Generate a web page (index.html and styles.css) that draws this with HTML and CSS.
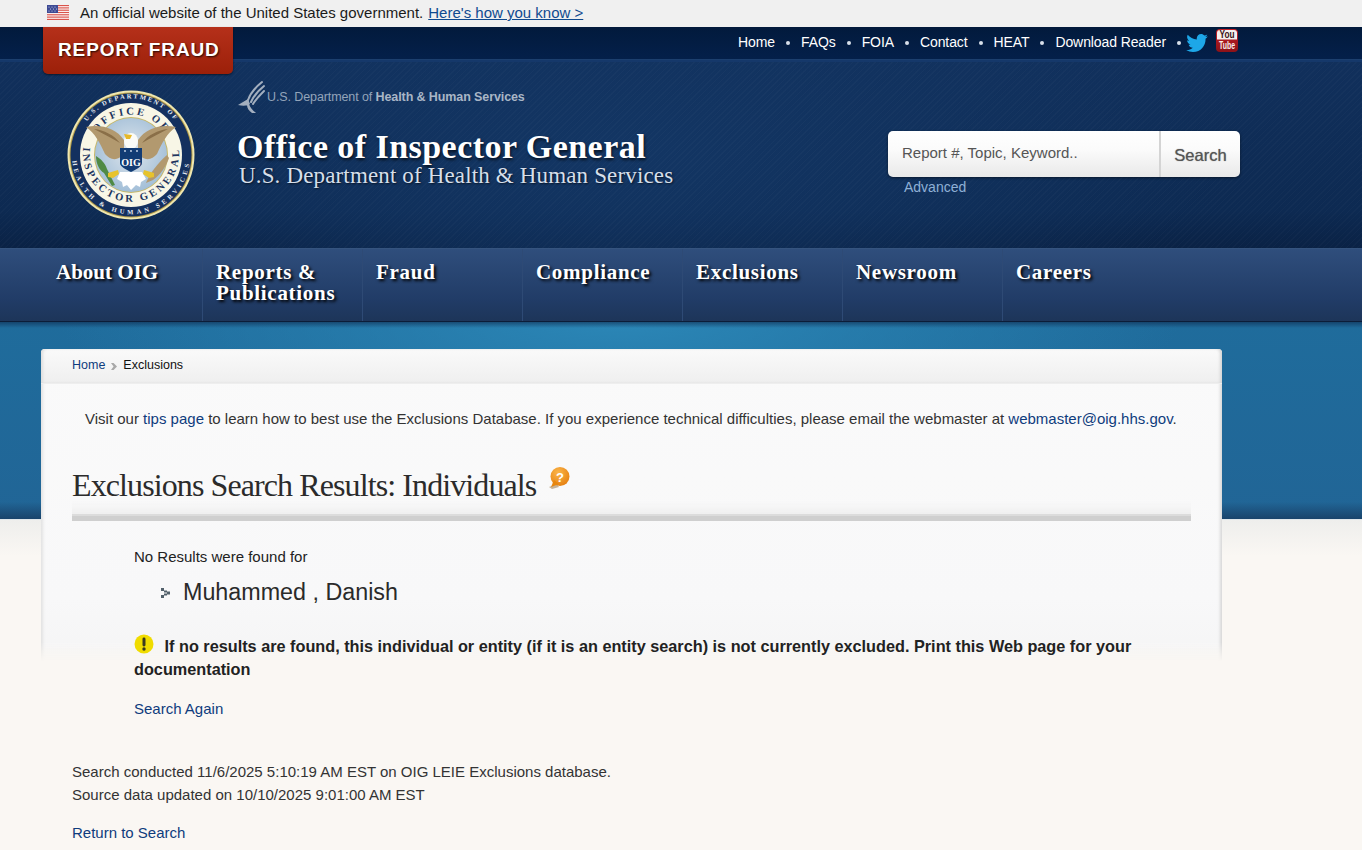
FILE: index.html
```html
<!DOCTYPE html>
<html lang="en">
<head>
<meta charset="utf-8">
<title>Exclusions Search Results: Individuals</title>
<link rel="stylesheet" href="styles.css">
</head>
<body>
<div class="gov-banner">
  <svg class="flag" width="22" height="15" viewBox="0 0 22 15">
    <rect width="22" height="15" fill="#fff"/>
    <g fill="#d9534a"><rect width="22" height="1.2"/><rect y="2.3" width="22" height="1.2"/><rect y="4.6" width="22" height="1.2"/><rect y="6.9" width="22" height="1.2"/><rect y="9.2" width="22" height="1.2"/><rect y="11.5" width="22" height="1.2"/><rect y="13.8" width="22" height="1.2"/></g>
    <rect width="11" height="8" fill="#3d4a94"/>
    <g fill="#cfd4ee"><circle cx="2" cy="2" r=".6"/><circle cx="5" cy="2" r=".6"/><circle cx="8" cy="2" r=".6"/><circle cx="3.5" cy="4" r=".6"/><circle cx="6.5" cy="4" r=".6"/><circle cx="9.5" cy="4" r=".6"/><circle cx="2" cy="6" r=".6"/><circle cx="5" cy="6" r=".6"/><circle cx="8" cy="6" r=".6"/></g>
  </svg>
  <span>An official website of the United States government.</span>
  <a class="gov-link" href="#">Here's how you know &gt;</a>
</div>

<div class="top-bar">
  <a class="fraud" href="#">REPORT FRAUD</a>
  <ul class="top-links">
    <li><a href="#">Home</a></li>
    <li><a href="#">FAQs</a></li>
    <li><a href="#">FOIA</a></li>
    <li><a href="#">Contact</a></li>
    <li><a href="#">HEAT</a></li>
    <li><a href="#">Download Reader</a></li>
  </ul>
  <svg class="twitter" width="22" height="18" viewBox="0 0 24 20"><path fill="#1da7e8" d="M24 2.4c-.9.4-1.8.7-2.8.8 1-.6 1.8-1.6 2.2-2.7-1 .6-2 1-3.1 1.2C19.300.7 18 0 16.600 0c-2.700 0-4.900 2.200-4.900 4.900 0 .4 0 .8.100 1.100C7.700 5.800 4.100 3.900 1.700.9 1.300 1.600 1 2.500 1 3.400c0 1.700.9 3.200 2.200 4.100-.8 0-1.600-.2-2.200-.6v.1c0 2.400 1.700 4.400 3.900 4.800-.7.2-1.500.2-2.200.1.600 2 2.400 3.400 4.600 3.400C5.600 17 3 17.900.9 17.900c-.3 0-.6 0-.9 0 2.200 1.400 4.800 2.100 7.500 2.100 9.100 0 14-7.500 14-14v-.6c1-.7 1.800-1.600 2.500-3z"/></svg>
  <svg class="youtube" width="22" height="23" viewBox="0 0 22 23">
    <defs><linearGradient id="ytRed" x1="0" y1="0" x2="0" y2="1"><stop offset="0" stop-color="#c62026"/><stop offset="1" stop-color="#8c1218"/></linearGradient></defs>
    <rect width="22" height="23" rx="4" fill="url(#ytRed)"/>
    <path d="M4 1h14a3 3 0 0 1 3 3v6.500H1V4a3 3 0 0 1 3-3z" fill="#f4f0ee"/>
    <text x="3.500" y="9" class="yt-you" textLength="15" lengthAdjust="spacingAndGlyphs">You</text>
    <text x="3" y="20" class="yt-tube" textLength="16" lengthAdjust="spacingAndGlyphs">Tube</text>
  </svg>
</div>

<header class="masthead">
  <svg class="seal" width="160" height="160" viewBox="0 0 160 160">
    <defs>
      <path id="arcTopOuter" d="M31 60A54 54 0 0 1 131 60"/>
      <path id="arcBottomOuter" d="M24 68A59 59 0 1 0 138 68"/>
      <path id="arcTopInner" d="M43 70A40 40 0 0 1 119 70"/>
      <path id="arcBottomInner" d="M34 72A48 48 0 1 0 128 72"/>
      <radialGradient id="sky" cx=".5" cy=".45" r=".6"><stop offset="0" stop-color="#dfe6ec"/><stop offset="1" stop-color="#9dbbd6"/></radialGradient>
    </defs>
    <ellipse cx="81" cy="83" rx="63.500" ry="64.500" fill="#efe7b0"/>
    <ellipse cx="81" cy="83" rx="61.500" ry="62.500" fill="#b39c49"/>
    <ellipse cx="81" cy="83" rx="60.500" ry="61.500" fill="#14305f"/>
    <ellipse cx="81" cy="83" rx="51" ry="52" fill="#f8f6e6"/>
    <ellipse cx="81" cy="83" rx="37" ry="38" fill="#c5b768"/>
    <ellipse cx="81" cy="83" rx="36" ry="37" fill="url(#sky)"/>
    <text class="seal-outer seal-top"><textPath href="#arcTopOuter" startOffset="50%">U.S. DEPARTMENT OF</textPath></text>
    <text class="seal-outer"><textPath href="#arcBottomOuter" startOffset="50%">HEALTH &amp; HUMAN SERVICES</textPath></text>
    <text class="seal-inner"><textPath href="#arcTopInner" startOffset="50%">OFFICE OF</textPath></text>
    <text class="seal-inner seal-bottom"><textPath href="#arcBottomInner" startOffset="50%">INSPECTOR GENERAL</textPath></text>
    <path fill="#b2996f" d="M36 55c15-3 30 1 38 13v13c-6 9-14 7-19 1C50 71 45 61 36 55z"/>
    <path fill="#b2996f" d="M126 55c-15-3-30 1-38 13v13c6 9 14 7 19 1 5-11 10-21 19-27z"/>
    <path fill="#8a6f48" d="M44 57c10 1 20 6 26 14-8-5-17-9-26-14zM118 57c-10 1-20 6-26 14 8-5 17-9 26-14z"/>
    <path fill="#4f8a45" d="M46 84c5 3 9 7 11 13l8 16-3 1-8-13c-5-3-8-10-8-17z"/>
    <path fill="#b2996f" d="M117 83l2 3c-3 9-9 17-16 22l-7 3c4-10 12-20 21-28z"/>
    <path fill="#fff" d="M70 100h22l4 7-5 3-1 5-4-2-5 5-4-5-4 2-1-5-5-3z"/>
    <path fill="#e7c32c" d="M58 101l10-3 1 4-6 4-5-1zM104 101l-10-3-1 4 6 4 5-1z"/>
    <ellipse cx="81" cy="69" rx="7" ry="8" fill="#fbfbf7"/>
    <path fill="#e6b829" d="M74 62l8 1-2 4-4 0z"/>
    <path fill="#123c74" d="M70 76h22v15c0 4-7 7-11 9-4-2-11-5-11-9z"/>
    <text class="seal-oig" x="81" y="94">OIG</text>
    <g fill="#d4dff0"><circle cx="75" cy="79" r=".9"/><circle cx="81" cy="79" r=".9"/><circle cx="87" cy="79" r=".9"/></g>
  </svg>

  <div class="title-block">
    <div class="hhs-line">
      <svg class="hhs-logo" width="28" height="34" viewBox="0 0 28 34">
        <g fill="none" stroke="#a3afbf" stroke-width="2" stroke-linecap="round">
          <path d="M25 2C20 6 14 12 11 20"/>
          <path d="M27 6C22 10 17 15 14 22"/>
          <path d="M27 11C23 15 19 19 16 24"/>
        </g>
        <path fill="#a3afbf" d="M1 25l10-6 2 5c-3 2-7 2-12 1zM12 24c1 3 3 6 7 9h-4c-3-2-5-5-5-8z"/>
      </svg>
      <span>U.S. Department of <b>Health &amp; Human Services</b></span>
    </div>
    <div class="org-name">Office of Inspector General</div>
    <div class="org-sub">U.S. Department of Health &amp; Human Services</div>
  </div>

  <div class="search-block">
    <form class="search-box">
      <input class="search-input" type="text" placeholder="Report #, Topic, Keyword..">
      <button class="search-btn" type="button">Search</button>
    </form>
    <a class="advanced" href="#">Advanced</a>
  </div>
</header>

<nav class="main-nav">
  <a class="nav-about" href="#">About OIG</a>
  <a href="#">Reports &amp; Publications</a>
  <a href="#">Fraud</a>
  <a href="#">Compliance</a>
  <a href="#">Exclusions</a>
  <a href="#">Newsroom</a>
  <a href="#">Careers</a>
</nav>

<main class="stage">
  <div class="card">
    <div class="crumbs">
      <a href="#">Home</a>
      <svg class="crumb-sep" width="6" height="7" viewBox="0 0 7 8"><path fill="#a9a9a9" d="M0 0l3 0 4 4-4 4H0l3-4z"/></svg>
      <span>Exclusions</span>
    </div>

    <p class="notice">Visit our <a href="#">tips page</a> to learn how to best use the Exclusions Database. If you experience technical difficulties, please email the webmaster at <a href="#">webmaster@oig.hhs.gov</a>.</p>

    <div class="heading-row">
      <h1>Exclusions Search Results: Individuals</h1>
      <svg class="help" width="23" height="24" viewBox="0 0 23 24">
        <defs><radialGradient id="bubble" cx=".4" cy=".3" r=".8"><stop offset="0" stop-color="#fbb64a"/><stop offset="1" stop-color="#e47c0c"/></radialGradient></defs>
        <path fill="#8a5a20" opacity=".45" d="M1 21l8-3 2 3-7 2z"/>
        <circle cx="12" cy="10.500" r="9.500" fill="url(#bubble)"/>
        <path fill="#e8860f" d="M6 14l-3 7 8-3z"/>
        <text x="12" y="15.500" class="help-mark">?</text>
      </svg>
    </div>

    <div class="results">
      <p class="none-found">No Results were found for</p>
      <div class="name-row">
        <svg class="name-bullet" width="9" height="10" viewBox="0 0 9 10"><path fill="#52606b" d="M0 0h3v3H0zM3 2.500h3v2H3zM0 7h3v3H0zM3 5.500h3v2H3zM6 3.500h3v3H6z"/></svg>
        <span>Muhammed , Danish</span>
      </div>
      <p class="warning">
        <svg class="warn-icon" width="20" height="20" viewBox="0 0 20 20"><circle cx="10" cy="10" r="9.500" fill="#f0dc00"/><rect x="8.500" y="3.500" width="3" height="9" rx="1.400" fill="#3a3a20"/><circle cx="10" cy="15" r="1.700" fill="#3a3a20"/></svg>
        If no results are found, this individual or entity (if it is an entity search) is not currently excluded. Print this Web page for your documentation
      </p>
      <a class="again" href="#">Search Again</a>
    </div>

    <div class="meta">
      <p>Search conducted 11/6/2025 5:10:19 AM EST on OIG LEIE Exclusions database.</p>
      <p>Source data updated on 10/10/2025 9:01:00 AM EST</p>
    </div>
    <a class="return" href="#">Return to Search</a>
  </div>
</main>
</body>
</html>
```

FILE: styles.css
```css
* { box-sizing: border-box; }
html, body { margin: 0; padding: 0; }
body {
  background: #faf7f3;
  color: #222;
  font-family: "Liberation Sans", Arial, sans-serif;
  font-size: 14px;
  min-width: 1362px;
}
a { color: #0f3c7d; text-decoration: none; }
p { margin: 0; }

/* Government banner */
.gov-banner {
  height: 27px;
  background: #f0f0f0;
  display: flex;
  align-items: center;
  padding: 0 0 2px 47px;
  font-size: 15px;
  color: #1b1b1b;
}
.flag { margin-right: 11px; }
.gov-link { color: #0f4a8f; text-decoration: underline; margin-left: 5px; }

/* Top bar */
.top-bar {
  position: relative;
  height: 33px;
  background: linear-gradient(#021a3c, #04204a);
  border-bottom: 1px solid #1c3f6e;
  display: flex;
  align-items: center;
  justify-content: flex-end;
  padding: 0 124px 2px 0;
}
.fraud {
  position: absolute;
  left: 43px;
  top: 0;
  width: 190px;
  height: 47px;
  padding: 12px 0 0 15px;
  background: linear-gradient(#b5301a, #9c2009);
  border-radius: 0 0 5px 5px;
  box-shadow: 0 1px 2px rgba(0,0,0,.5);
  color: #fff;
  font-size: 19px;
  font-weight: bold;
  letter-spacing: .9px;
  text-shadow: 1px 1px 2px rgba(0,0,0,.8);
  z-index: 2;
}
.top-links {
  display: flex;
  list-style: none;
  margin: 0;
  padding: 0;
}
.top-links li {
  display: flex;
  align-items: center;
}
.top-links li::after {
  content: "";
  width: 4px;
  height: 4px;
  border-radius: 50%;
  background: #d8e0ea;
  margin: 2px 11px 0;
}
.top-links a { color: #fff; font-size: 14px; letter-spacing: -.1px; }
.twitter { margin: 2px 8px 0 -6px; }
.youtube { margin-top: -3px; }
.yt-you, .yt-tube {
  font-family: "Liberation Sans", Arial, sans-serif;
  font-weight: bold;
}
.yt-you { fill: #3a1216; font-size: 10px; }
.yt-tube { fill: #f8eeec; font-size: 11px; }

/* Masthead */
.masthead {
  height: 188px;
  display: flex;
  background:
    repeating-linear-gradient(135deg, rgba(255,255,255,.018) 0 1px, transparent 1px 4px),
    radial-gradient(ellipse 620px 220px at 620px 90px, #133664, rgba(19,54,100,0) 100%),
    linear-gradient(#11305c, #0d2a52 80%, #0a2245);
  box-shadow: inset 0 2px 0 #15386a;
  padding: 10px 122px 0 50px;
}
.seal { flex: none; margin: 2px 27px 0 0; }
.seal-outer {
  font-family: "Liberation Serif", serif;
  font-size: 6.500px;
  font-weight: bold;
  letter-spacing: 3.400px;
  text-anchor: middle;
  fill: #e8edf4;
}
.seal-top { letter-spacing: 1.900px; }
.seal-inner {
  font-family: "Liberation Serif", serif;
  font-size: 10.500px;
  font-weight: bold;
  letter-spacing: 2.600px;
  text-anchor: middle;
  fill: #20345e;
}
.seal-bottom { letter-spacing: 2.800px; }
.seal-oig {
  font-family: "Liberation Serif", serif;
  font-size: 10px;
  font-weight: bold;
  text-anchor: middle;
  fill: #fff;
}
.title-block { flex: 1; padding-top: 10px; }
.hhs-line {
  display: flex;
  align-items: center;
  height: 34px;
  color: #93a4ba;
  font-size: 12.500px;
  letter-spacing: -.1px;
}
.hhs-line b { color: #a9b6c6; }
.hhs-logo { margin-right: 2px; }
.org-name {
  margin-top: 15px;
  color: #fff;
  font-family: "Liberation Serif", serif;
  font-size: 34px;
  font-weight: bold;
  letter-spacing: .45px;
  line-height: 36px;
  text-shadow: 1px 2px 3px rgba(0,0,0,.7);
}
.org-sub {
  margin: -2px 0 0 2px;
  color: #d6dfea;
  font-family: "Liberation Serif", serif;
  font-size: 23px;
  letter-spacing: .15px;
  line-height: 26px;
  text-shadow: 1px 1px 2px rgba(0,0,0,.6);
}
.search-block { width: 352px; flex: none; padding-top: 61px; }
.search-box {
  display: flex;
  height: 46px;
  border-radius: 5px;
  overflow: hidden;
  background: linear-gradient(#fff, #fbfbfb 40%, #e9e9e9);
  box-shadow: 0 1px 3px rgba(0,0,0,.5);
  margin: 0;
}
.search-input {
  width: 273px;
  border: 0;
  background: transparent;
  padding: 0 0 3px 14px;
  font-family: "Liberation Sans", Arial, sans-serif;
  font-size: 15px;
  outline: none;
  border-right: 2px solid #d4d4d4;
}
.search-input::placeholder { color: #555; opacity: 1; }
.search-btn {
  flex: 1;
  border: 0;
  background: transparent;
  padding: 3px 0 0;
  color: #555;
  font-family: "Liberation Sans", Arial, sans-serif;
  font-size: 16.500px;
  text-shadow: 0 0 1px #777;
}
.advanced {
  display: block;
  margin: 2px 0 0 16px;
  color: #8fb0d6;
  font-size: 14px;
  line-height: 17px;
}

/* Main navigation */
.main-nav {
  height: 74px;
  display: flex;
  padding-left: 42px;
  background: linear-gradient(#2f4e7c, #213c67 70%, #1d3559);
  border-top: 1px solid #35547f;
  border-bottom: 1px solid #0c1d38;
}
.main-nav a {
  width: 160px;
  padding: 13px 8px 0 13px;
  border-left: 1px solid #2e4a75;
  color: #fff;
  font-family: "Liberation Serif", serif;
  font-size: 21px;
  font-weight: bold;
  letter-spacing: .7px;
  line-height: 21px;
  text-shadow: 2px 2px 3px #000;
}
.main-nav .nav-about { border-left: 0; padding-left: 14px; letter-spacing: 0; }

/* Page stage */
.stage {
  padding-top: 27px;
  background:
    linear-gradient(rgba(24,62,100,0) 180px, rgba(24,62,100,.85) 197px, #dfe6ea 197px, #dfe6ea 198px) 0 0 / 100% 198px no-repeat,
    linear-gradient(rgba(12,35,70,.55), rgba(12,35,70,0) 6px) 0 0 / 100% 6px no-repeat,
    radial-gradient(ellipse 560px 130px at 620px 0, #2b86b6, rgba(43,134,182,0) 100%) 0 0 / 100% 197px no-repeat,
    linear-gradient(#1f6c9c, #216596) 0 0 / 100% 197px no-repeat,
    linear-gradient(#eeeeec, #faf7f3) 0 198px / 100% 36px no-repeat;
}
.card {
  position: relative;
  isolation: isolate;
  width: 1181px;
  margin-left: 41px;
  padding: 0 31px 12px;
}
.card::before {
  content: "";
  position: absolute;
  z-index: -1;
  left: 0;
  top: 0;
  width: 100%;
  height: 312px;
  border-radius: 4px 4px 0 0;
  background: linear-gradient(#fafafa, #f8f8f9 80%, #f5f5f5);
  box-shadow: inset -3px 0 3px -1px #d8d8d8, inset 3px 0 3px -1px #e2e2e2;
  -webkit-mask-image: linear-gradient(#000 94%, transparent);
  mask-image: linear-gradient(#000 94%, transparent);
}
.crumbs {
  display: flex;
  align-items: center;
  height: 35px;
  margin: 0 -31px;
  padding: 0 0 2px 31px;
  font-size: 12.500px;
  color: #111;
  border-radius: 4px 4px 0 0;
  background: linear-gradient(#fafafa, #efefef);
  border-bottom: 1px solid #eee;
  box-shadow: inset -3px 0 3px -1px #d4d4d4, inset 3px 0 3px -1px #dedede;
}
.crumb-sep { margin: 3px 6px 0 6px; }
.notice {
  margin: 25px 0 0 13px;
  font-size: 15px;
  line-height: 20px;
  color: #333;
}
.heading-row {
  display: flex;
  align-items: flex-start;
  margin-top: 28px;
  height: 64px;
  border-bottom: 5px solid #cfcfcf;
  box-shadow: inset 0 -2px 0 #dcdcdc, inset 0 -20px 14px -16px #e9e9e9;
}
h1 {
  margin: 6px 0 0;
  color: #2b2b2b;
  font-family: "Liberation Serif", serif;
  font-size: 32px;
  font-weight: normal;
  letter-spacing: -.9px;
  line-height: 44px;
}
.help { margin: 9px 0 0 12px; }
.help-mark {
  font-family: "Liberation Sans", Arial, sans-serif;
  font-size: 13px;
  font-weight: bold;
  text-anchor: middle;
  fill: #fff;
}
.results { padding: 27px 0 0 62px; }
.none-found { font-size: 15px; line-height: 18px; }
.name-row {
  display: flex;
  align-items: center;
  margin: 11px 0 0 27px;
  height: 30px;
  font-size: 23.300px;
  color: #2a2a2a;
}
.name-bullet { margin-right: 13px; margin-top: 2px; }
.warning {
  margin: 27px 40px 0 0;
  font-size: 16.250px;
  font-weight: bold;
  line-height: 23px;
  color: #222;
}
.warn-icon { vertical-align: -2px; margin-right: 6px; }
.again { display: block; margin-top: 18px; font-size: 15px; line-height: 20px; }
.meta { margin-top: 41px; font-size: 15px; line-height: 23px; color: #333; }
.return { display: block; margin-top: 17px; font-size: 15px; line-height: 20px; }
```
